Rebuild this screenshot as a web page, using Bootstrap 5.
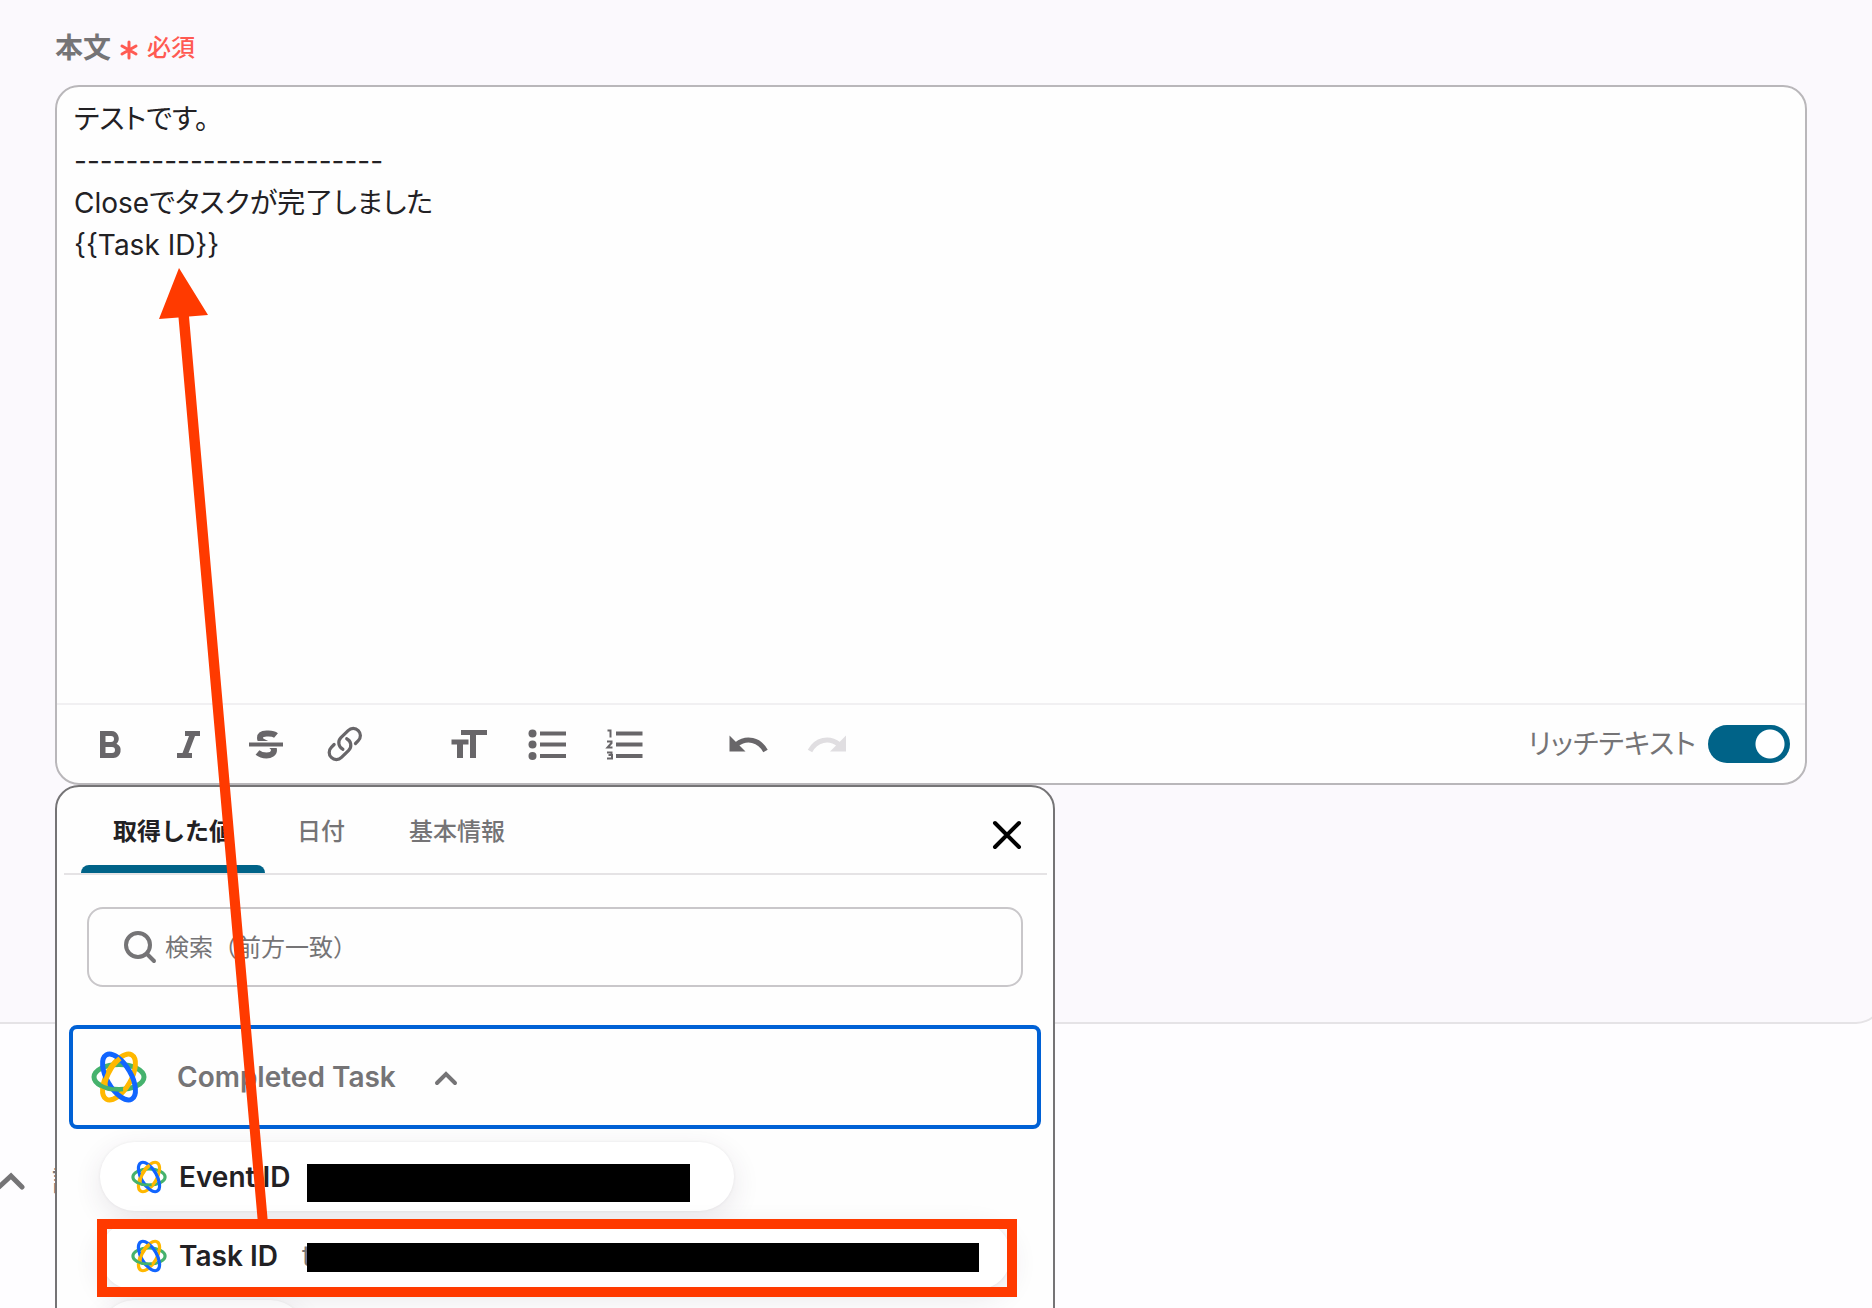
<!DOCTYPE html>
<html lang="ja">
<head>
<meta charset="utf-8">
<meta name="viewport" content="width=device-width, initial-scale=1">
<title>本文</title>
<link rel="stylesheet" href="https://cdn.jsdelivr.net/npm/bootstrap@5.3.0/dist/css/bootstrap.min.css">
<style>
  body { font-family: Inter, "Noto Sans CJK JP", sans-serif; font-size: 28px; line-height: 42px; color: #222124; background: #fefdff; min-height: 100vh; font-feature-settings: "palt"; }
  .stage { min-height: 100vh; }
  .form-panel { background: #fbf9fd; border: 2px solid #e5e3e6; border-width: 0 2px 2px 0; border-radius: 0 0 28px 0; margin-right: -12px; padding: 27px 75px 237px 55px; }
  .text-soft { color: #757476; }
  .field-label { font-weight: 700; }
  .required-note { color: #ff5a52; font-size: 24px; font-weight: 500; }
  .editor { border: 2px solid #b9b7ba; border-radius: 24px; background: #fefefe; }
  .editor-text { height: 616px; padding: 11px 17px; font-size: 28px; line-height: 42px; color: #222124; resize: none; border-radius: 24px; font-feature-settings: "palt"; }
  .editor-text, .editor-text:focus { background: transparent; border: 0; box-shadow: none; }
  .toolbar { border-top: 2px solid #f1f0f2; padding: 0 15px 0 14px; }
  .tool { width: 78px; height: 78px; padding: 0; border: 0; color: #686669; line-height: 1; }
  .tool svg { width: 40px; height: 40px; }
  .tool:disabled { color: #e0dee1; opacity: 1; border: 0; }
  .tool-group { margin-right: 46px; }
  .form-check-input.rich-switch { width: 82px; height: 38px; margin: 0; float: none; border-radius: 19px; border: 0; background-color: #006388; background-image: radial-gradient(circle at 62px 19px, #fff 14px, transparent 15px) !important; background-position: 0 0; background-size: 100% 100%; }
  .picker { width: 1000px; height: 700px; top: 100%; left: -2px; margin-top: 2px; border: 2px solid #757476; border-radius: 24px 24px 0 0; background: #fefefe; }
  .tab-row { margin: 0 6px 0 7px; border-bottom: 2px solid #e5e3e5; padding: 0 0 0 17px; height: 88px; }
  .tab-btn { position: relative; font-size: 24px; line-height: 36px; font-weight: 500; color: #757476; padding: 27px 32px 23px; border: 0; border-radius: 0; }
  .tab-btn.chosen { color: #222124; font-weight: 600; }
  .tab-btn.chosen::after { content: ""; position: absolute; left: 0; right: 0; bottom: 0; height: 8px; background: #006388; border-radius: 8px 8px 0 0; }
  .close-btn { padding: 0; width: 42px; height: 42px; border: 0; margin: 27px 19px 0 0; line-height: 1; color: #000; }
  .search-box { margin: 32px 30px 0; border: 2px solid #c9c7ca; border-radius: 16px; height: 80px; padding: 0 24px 0 34px; gap: 8px; }
  .search-box input { font-size: 24px; line-height: 36px; padding: 2px 0 0; font-feature-settings: normal; }
  .search-box input, .search-box input:focus { background: none; border: 0; box-shadow: none; }
  .search-box input::placeholder { color: #757476; opacity: 1; }
  .group-btn { margin: 38px 12px 0; height: 104px; border: 4px solid #0061d5; border-radius: 8px; background: #fefefe; color: #757476; font-weight: 600; font-size: 28px; padding: 0 18px; }
  .group-btn .group-name { margin: 0 38px 0 30px; }
  .chips { margin: 13px 43px 0; gap: 10px; }
  .chip { height: 69px; border-radius: 35px; border: 0; background: #fff; box-shadow: 0 8px 28px rgba(60,50,70,.11), 0 0 3px rgba(60,50,70,.08); padding: 0 32px 0 31px; font-size: 28px; font-weight: 600; color: #222124; }
  .chip svg { margin-right: 12px; }
  .chip-name { width: 123px; }
  .chip-value { color: #757476; font-weight: 400; }
  .blackout { position: absolute; left: 207px; background: #000; }
  .chip-event .blackout { top: 22px; bottom: 9px; width: 383px; }
  .chip-task .blackout { top: 22px; bottom: 18px; width: 672px; }
  .chip-event { width: 634px; }
  .chip-task { width: 911px; }
  .chip-more { width: 205px; }
  .callout-frame { position: absolute; left: -3px; width: 920px; top: -2px; height: 78px; border: 10px solid #ff3a00; pointer-events: none; }
  .callout-arrow { left: 150px; top: 260px; width: 130px; height: 964px; z-index: 30; pointer-events: none; }
  .next-section { padding: 136px 0 0; font-weight: 500; gap: 26px; }
  .next-section svg { margin-left: -8px; }
</style>
</head>
<body>
<svg class="d-none" aria-hidden="true">
  <symbol id="orbit" viewBox="0 0 56 56">
    <g fill="none" stroke-width="5">
      <ellipse cx="28" cy="28" rx="25" ry="12.5" stroke="#45b26d"/>
      <ellipse cx="28" cy="28" rx="25.5" ry="12" stroke="#ffb800" transform="rotate(-60 28 28)"/>
      <ellipse cx="28" cy="28" rx="25.5" ry="12" stroke="#1165ff" transform="rotate(60 28 28)"/>
      <path d="M14.500 38.300C12.500 33 19 17 29 9.500" stroke="#ffb800"/>
      <path d="M8 35.500C15 40 25 41 32 40.300" stroke="#45b26d" stroke-width="4"/>
    </g>
  </symbol>
</svg>
<main class="stage position-relative overflow-hidden">
  <section class="form-panel">
    <div class="d-flex align-items-center mb-3">
      <label for="body-text" class="field-label text-soft me-2">本文</label>
      <svg width="20" height="20" viewBox="0 0 20 20" class="me-2 mt-1" stroke="#ff5a52" stroke-width="3" stroke-linecap="round" aria-hidden="true"><path d="M10 2v16M3 6l14 8M3 14l14-8"/></svg>
      <span class="required-note">必須</span>
    </div>
    <div class="editor position-relative">
      <textarea id="body-text" class="form-control editor-text d-block" spellcheck="false">テストです。
------------------------
Closeでタスクが完了しました
{{Task ID}}</textarea>
      <div class="toolbar d-flex align-items-center">
        <div class="tool-group d-flex">
          <button type="button" class="btn tool" aria-label="太字"><svg viewBox="0 0 40 40" fill="currentColor" fill-rule="evenodd"><path d="M10 7h11.500a7.500 7.500 0 0 1 5 12.800A7.500 7.500 0 0 1 23.500 34H10zM15.500 12v6h5.500a3 3 0 0 0 0-6zM15.500 23v6h6.500a3 3 0 0 0 0-6z"/></svg></button>
          <button type="button" class="btn tool" aria-label="斜体"><svg viewBox="0 0 40 40" fill="currentColor"><path d="M17 7h15v5h-5l-6.500 17h3.500v5H9v-5h5.500L21 12h-4z"/></svg></button>
          <button type="button" class="btn tool" aria-label="取り消し線"><svg viewBox="0 0 40 40" fill="none" stroke="currentColor"><path d="M30 11.500C27 9 24 9.500 20.500 9.500c-4 0-6.500 1.500-6.500 4.500 0 6 14 5 14 12 0 3.500-3.500 5.500-7.500 5.500-3.500 0-6-.5-9-3" stroke-width="6"/><path d="M8 20.500h25" stroke="#fefefe" stroke-width="7"/><path d="M3 20.500h34" stroke-width="4"/></svg></button>
          <button type="button" class="btn tool" aria-label="リンク"><svg viewBox="-1 -.5 25 25" fill="none" stroke="currentColor" stroke-width="2" stroke-linecap="round"><path d="M13.190 8.688a4.500 4.500 0 0 1 1.242 7.244l-4.500 4.500a4.500 4.500 0 0 1-6.364-6.364l1.757-1.757m13.350-.622 1.757-1.757a4.500 4.500 0 0 0-6.364-6.364l-4.500 4.500a4.500 4.500 0 0 0 1.242 7.244"/></svg></button>
        </div>
        <div class="tool-group d-flex">
          <button type="button" class="btn tool" aria-label="文字サイズ"><svg viewBox="0 0 40 40" fill="currentColor"><path d="M13 6h26v5H28v23h-6V11h-9zM3.500 15.500h17v5H15V34H9V20.500H3.500z"/></svg></button>
          <button type="button" class="btn tool" aria-label="箇条書き"><svg viewBox="0 0 40 40" fill="currentColor"><circle cx="6.500" cy="9.500" r="4"/><circle cx="6.500" cy="20.500" r="4"/><circle cx="6.500" cy="32" r="4"/><path d="M14 7.500h26v4H14zM14 18.500h26v4H14zM14 30h26v4H14z"/></svg></button>
          <button type="button" class="btn tool" aria-label="番号付きリスト"><svg viewBox="0 0 40 40" fill="currentColor"><g fill="none" stroke="currentColor" stroke-width="2"><path d="M3.500 6.500h3V13.500M3 17.500h4.500v1.500l-4 4.500h5M3 28.500h4.500v2.500h-3 3.500v3.500H3"/></g><path d="M12 7.500h26.500v4H12zM12 18.500h26.500v4H12zM12 30h26.500v4H12z"/></svg></button>
        </div>
        <div class="d-flex">
          <button type="button" class="btn tool" aria-label="元に戻す"><svg viewBox="0 0 40 40"><path fill="currentColor" d="M1.500 11.500 17.500 27.500h-16z"/><path d="M8.500 20.500c10-8 23-5 29 6.500" fill="none" stroke="currentColor" stroke-width="5"/></svg></button>
          <button type="button" class="btn tool" aria-label="やり直す" disabled><svg viewBox="0 0 40 40"><path fill="currentColor" d="M40 11.500 24 27.500h16z"/><path d="M33 20.500c-10-8-23-5-29 6.500" fill="none" stroke="currentColor" stroke-width="5"/></svg></button>
        </div>
        <div class="form-check form-switch d-flex align-items-center ms-auto mb-0 p-0 gap-2">
          <label for="rich" class="form-check-label text-soft me-1">リッチテキスト</label>
          <input id="rich" class="form-check-input rich-switch" type="checkbox" role="switch" checked>
        </div>
      </div>

      <div class="picker position-absolute">
        <div class="tab-row d-flex align-items-start">
          <button type="button" class="btn tab-btn chosen">取得した値</button>
          <button type="button" class="btn tab-btn">日付</button>
          <button type="button" class="btn tab-btn">基本情報</button>
          <button type="button" class="btn close-btn ms-auto" aria-label="閉じる"><svg width="42" height="42" viewBox="0 0 42 42" fill="none" stroke="currentColor" stroke-width="4" stroke-linecap="round"><path d="m9 9 24 24M33 9 9 33"/></svg></button>
        </div>
        <div class="search-box d-flex align-items-center">
          <svg class="flex-shrink-0" width="34" height="34" viewBox="0 0 34 34" fill="none" stroke="#757476" stroke-width="4" stroke-linecap="round" aria-hidden="true"><circle cx="15" cy="15" r="12"/><path d="m24 24 7 7"/></svg>
          <input class="form-control" type="text" placeholder="検索（前方一致）" aria-label="検索（前方一致）">
        </div>
        <div class="d-flex flex-column">
          <button type="button" class="btn group-btn d-flex align-items-center" aria-expanded="true">
            <svg width="56" height="56" aria-hidden="true"><use href="#orbit"/></svg>
            <span class="group-name">Completed Task</span>
            <svg width="24" height="16" viewBox="0 0 24 16" class="mt-1" fill="none" stroke="currentColor" stroke-width="4" stroke-linecap="round" aria-hidden="true"><path d="m3 12 9-9 9 9"/></svg>
          </button>
        </div>
        <div class="chips d-flex flex-column align-items-start">
          <button type="button" class="btn chip chip-event position-relative d-flex align-items-center">
            <svg width="36" height="36" aria-hidden="true"><use href="#orbit"/></svg><span class="text-nowrap">Event ID</span><span class="blackout"></span>
          </button>
          <button type="button" class="btn chip chip-task position-relative d-flex align-items-center">
            <svg width="36" height="36" aria-hidden="true"><use href="#orbit"/></svg><span class="chip-name text-start">Task ID</span><span class="chip-value text-start">t</span><span class="blackout"></span><span class="callout-frame"></span>
          </button>
          <button type="button" class="btn chip chip-more" aria-label="次の項目"></button>
        </div>
      </div>
    </div>
  </section>
  <section class="next-section d-flex align-items-center text-soft">
    <svg width="34" height="24" viewBox="0 0 34 24" fill="none" stroke="currentColor" stroke-width="5" stroke-linecap="round" aria-hidden="true"><path d="M7 18 19 7l11 11"/></svg>
    <span>設定</span>
  </section>
  <svg class="callout-arrow position-absolute" viewBox="0 0 130 964" fill="#ff3a00" aria-hidden="true"><path d="M29 8 9 59l19.500-1.500L108 964h10L39 56.500l19-1.500z"/></svg>
</main>
<script src="https://cdn.jsdelivr.net/npm/bootstrap@5.3.0/dist/js/bootstrap.bundle.min.js"></script>
</body>
</html>
